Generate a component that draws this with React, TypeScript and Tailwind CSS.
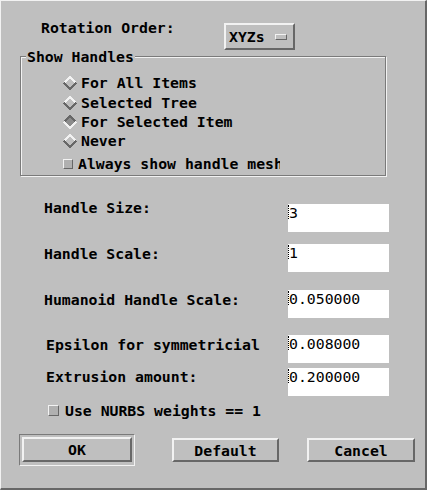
import React from 'react'

const RAISED =
  'border-2 border-t-[#f2f2f2] border-l-[#f2f2f2] border-r-[#676767] border-b-[#676767]'

function Diamond({ on }: { on?: boolean }) {
  return (
    <svg width="14" height="14" viewBox="0 0 14 14" shapeRendering="crispEdges" className="shrink-0">
      <polygon points="7,1 13,7 7,13 1,7" fill={on ? '#8c8c8c' : '#bfbfbf'} />
      <path d="M1 7 L7 1 L13 7" fill="none" stroke={on ? '#676767' : '#f2f2f2'} strokeWidth="2" />
      <path d="M13 7 L7 13 L1 7" fill="none" stroke={on ? '#f2f2f2' : '#676767'} strokeWidth="2" />
    </svg>
  )
}

function Check({ size = 'w-[10px] h-[10px]' }: { size?: string }) {
  return (
    <span
      className={`${size} shrink-0 border border-t-[#f2f2f2] border-l-[#f2f2f2] border-r-[#676767] border-b-[#676767] bg-[#b0b0b0]`}
    />
  )
}

function Field({ value }: { value: string }) {
  return (
    <div className="w-[101px] h-[28px] bg-white flex items-start">
      <span className="w-0 h-[14px] mt-[1px] border-l border-dotted border-black" />
      <span>{value}</span>
    </div>
  )
}

const ROWS = [
  { label: 'Handle Size:', value: '3', labelTop: '-mt-[5px]', gap: 'mt-[28px]', indent: '' },
  { label: 'Handle Scale:', value: '1', labelTop: 'mt-[1px]', gap: 'mt-[12px]', indent: '' },
  { label: 'Humanoid Handle Scale:', value: '0.050000', labelTop: 'mt-[1px]', gap: 'mt-[18px]', indent: '' },
  { label: 'Epsilon for symmetricial', value: '0.008000', labelTop: 'mt-[1px]', gap: 'mt-[17px]', indent: 'pl-[2px]' },
  { label: 'Extrusion amount:', value: '0.200000', labelTop: 'mt-0', gap: 'mt-[5px]', indent: 'pl-[2px]' },
]

export default function App() {
  return (
    <div className="w-[427px] h-[490px] overflow-hidden bg-[#bfbfbf] border-t border-l border-t-[#f2f2f2] border-l-[#f2f2f2] border-r-2 border-b-2 border-r-[#676767] border-b-[#676767] font-['DejaVu_Sans_Mono',monospace] text-[14.8px] leading-[17px] text-black flex flex-col">
      {/* rotation order */}
      <div className="flex items-start pt-[18px] pl-[40px]">
        <span className="w-[183px] font-bold">Rotation Order:</span>
        <div className={`mt-[4px] w-[71px] h-[27px] ${RAISED} flex items-center pl-[3px]`}>
          <span className="font-bold">XYZs</span>
          <span className="ml-[10px] w-[12px] h-[6px] border border-t-[#f2f2f2] border-l-[#f2f2f2] border-r-[#676767] border-b-[#676767]" />
        </div>
      </div>

      {/* show handles frame */}
      <div className="relative mt-[6px] ml-[19px] w-[366px] h-[120px] border border-[#7a7a7a] shadow-[1px_1px_0_#f2f2f2,inset_1px_1px_0_#f2f2f2]">
        <span className="absolute left-[5px] -top-[9px] px-[1px] bg-[#bfbfbf] font-bold">Show Handles</span>
        <div className="flex flex-col pt-[17px] pl-[42px] font-bold">
          <div className="h-[20px] flex items-start">
            <span className="h-[17px] flex items-center"><Diamond /></span>
            <span className="ml-[4px]">For All Items</span>
          </div>
          <div className="h-[19px] flex items-start">
            <span className="h-[17px] flex items-center"><Diamond /></span>
            <span className="ml-[4px]">Selected Tree</span>
          </div>
          <div className="h-[19px] flex items-start">
            <span className="h-[17px] flex items-center"><Diamond on /></span>
            <span className="ml-[4px]">For Selected Item</span>
          </div>
          <div className="h-[23px] flex items-start">
            <span className="h-[17px] flex items-center"><Diamond /></span>
            <span className="ml-[4px]">Never</span>
          </div>
          <div className="h-[17px] flex items-center">
            <Check />
            <span className="ml-[5px] w-[202px] overflow-hidden whitespace-nowrap">Always show handle mesh</span>
          </div>
        </div>
      </div>

      {/* numeric settings */}
      <div className="flex flex-col pl-[43px]">
        {ROWS.map(r => (
          <div key={r.label} className={`${r.gap} h-[28px] flex items-start`}>
            <span className={`w-[244px] font-bold ${r.labelTop} ${r.indent}`}>{r.label}</span>
            <Field value={r.value} />
          </div>
        ))}
        <div className="mt-[6px] h-[17px] flex items-center pl-[4px]">
          <Check size="w-[11px] h-[11px]" />
          <span className="ml-[6px] font-bold">Use NURBS weights == 1</span>
        </div>
      </div>

      {/* buttons */}
      <div className="mt-[15px] pl-[18px] flex items-start font-bold">
        <div className="w-[116px] h-[32px] border border-t-[#7a7a7a] border-l-[#7a7a7a] border-r-[#f2f2f2] border-b-[#f2f2f2] p-[2px] pb-[3px]">
          <div className={`w-full h-full ${RAISED} flex items-center justify-center`}>OK</div>
        </div>
        <div className={`ml-[37px] mt-[4px] w-[107px] h-[24px] ${RAISED} flex items-center justify-center`}>Default</div>
        <div className={`ml-[28px] mt-[4px] w-[108px] h-[24px] ${RAISED} flex items-center justify-center`}>Cancel</div>
      </div>
    </div>
  )
}
